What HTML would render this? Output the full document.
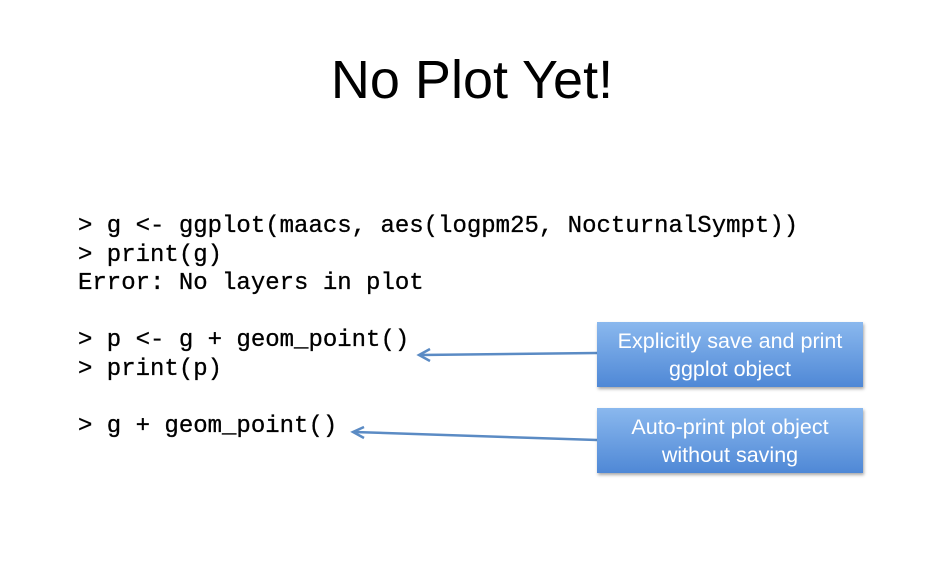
<!DOCTYPE html>
<html><head><style>
body{margin:0;width:928px;height:580px;background:#fff;position:relative;overflow:hidden;font-family:"Liberation Sans",sans-serif}
h1{position:absolute;top:49px;left:0;width:944px;text-align:center;margin:0;font-weight:normal;font-size:54px;color:#000;line-height:62px}
pre{position:absolute;left:78px;top:213px;margin:0;font-family:"Liberation Mono",monospace;font-size:24px;line-height:28.6px;color:#000;-webkit-text-stroke:0.3px #000}
.box{position:absolute;left:597px;width:266px;height:65px;background:linear-gradient(#8ab8ee,#4f88d6);box-shadow:1px 2px 3px rgba(0,0,0,.35);color:#fff;text-align:center;font-size:21.5px;line-height:28px;display:flex;align-items:center;justify-content:center}
</style></head><body>
<h1>No Plot Yet!</h1>
<pre>&gt; g &lt;- ggplot(maacs, aes(logpm25, NocturnalSympt))
&gt; print(g)
Error: No layers in plot

&gt; p &lt;- g + geom_point()
&gt; print(p)

&gt; g + geom_point()</pre>
<svg width="928" height="580" style="position:absolute;left:0;top:0">
<g stroke="#5b8bc4" stroke-width="2.5" fill="none">
<line x1="597" y1="353" x2="420" y2="355"/>
<polyline points="430,349 419,355 430,361"/>
<line x1="597" y1="440" x2="354" y2="432"/>
<polyline points="364,427 353,432 364,438"/>
</g></svg>
<div class="box" style="top:322px">Explicitly save and print<br>ggplot object</div>
<div class="box" style="top:408px">Auto-print plot object<br>without saving</div>
</body></html>
